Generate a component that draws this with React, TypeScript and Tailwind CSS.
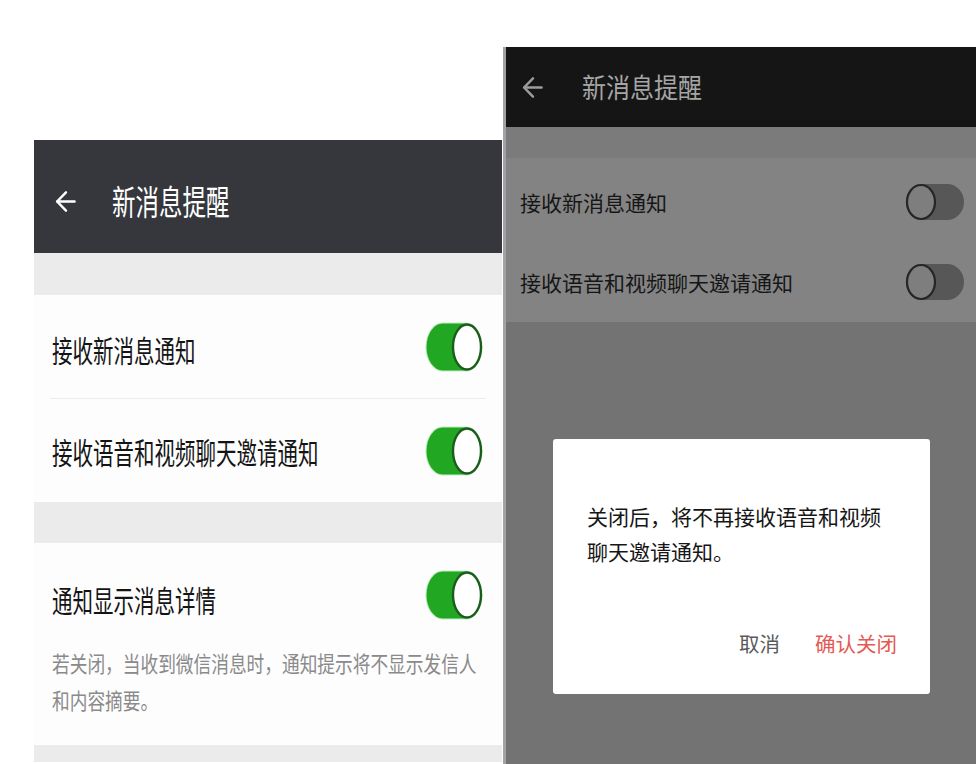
import React from "react";

function BackArrow({ color, w, h }: { color: string; w: number; h: number }) {
  return (
    <svg width={w} height={h} viewBox="0 0 22 24" fill="none">
      <path d="M20.5 12H2.5" stroke={color} strokeWidth="2.6" strokeLinecap="round" />
      <path d="M11.5 2.5L2.2 12L11.5 21.5" stroke={color} strokeWidth="2.6" strokeLinecap="round" strokeLinejoin="round" />
    </svg>
  );
}

function GreenToggle() {
  return (
    <svg width="60" height="52" viewBox="0 0 60 52" className="shrink-0">
      <rect x="1.5" y="1.5" width="57" height="49" rx="17" ry="24.5" fill="#9be29b" opacity="0.6" />
      <rect x="2.5" y="2.5" width="55" height="47" rx="16" ry="23.5" fill="#22a722" />
      <ellipse cx="43" cy="26" rx="14" ry="22.5" fill="#ffffff" stroke="#1b5e1b" strokeWidth="2.4" />
    </svg>
  );
}

function GrayToggle() {
  return (
    <svg width="60" height="38" viewBox="0 0 60 38" className="shrink-0">
      <rect x="1" y="1" width="58" height="36" rx="17" ry="18" fill="#575757" />
      <ellipse cx="16" cy="19" rx="14" ry="17" fill="#7e7e7e" stroke="#262626" strokeWidth="2.2" />
    </svg>
  );
}

function LeftPanel() {
  return (
    <div className="ml-[34px] mt-[140px] w-[468px] flex flex-col bg-[#fdfdfe] shrink-0">
      <div className="h-[113px] bg-[#36373c] flex items-center pl-[21px] pt-[10px]">
        <BackArrow color="#ffffff" w={21} h={23} />
        <span className="ml-[36px] text-[23.5px] leading-none text-white inline-block scale-y-[1.45] origin-center">
          新消息提醒
        </span>
      </div>
      <div className="h-[42px] bg-[#ebebec]" />
      <div className="h-[103px] flex items-center justify-between pl-[18px] pr-[18px]">
        <span className="text-[20.5px] leading-none text-[#141414] inline-block scale-y-[1.45] mt-[5px]">接收新消息通知</span>
        <GreenToggle />
      </div>
      <div className="h-px bg-[#ececee] mx-[16px]" />
      <div className="h-[103px] flex items-center justify-between pl-[18px] pr-[18px]">
        <span className="text-[20.5px] leading-none text-[#141414] inline-block scale-y-[1.45] mt-[2px]">接收语音和视频聊天邀请通知</span>
        <GreenToggle />
      </div>
      <div className="h-[41px] bg-[#ebebec]" />
      <div className="h-[202px] flex flex-col">
        <div className="h-[104px] flex items-center justify-between pl-[18px] pr-[18px]">
          <span className="text-[20.5px] leading-none text-[#141414] inline-block scale-y-[1.45] mt-[8px]">通知显示消息详情</span>
          <GreenToggle />
        </div>
        <div className="pl-[18px] mt-[-3px] text-[17.7px] leading-[37px] text-[#8a8a8a] whitespace-nowrap">
          <span className="inline-block scale-y-[1.25]">若关闭，当收到微信消息时，通知提示将不显示发信人</span>
          <br />
          <span className="inline-block scale-y-[1.25]">和内容摘要。</span>
        </div>
      </div>
      <div className="h-[17px] bg-[#ebebec]" />
      <div className="h-[2px] bg-white" />
    </div>
  );
}

function RightPanel() {
  return (
    <div className="ml-px mt-[47px] w-[473px] h-[717px] shrink-0 border-l-[3px] border-[#a2a2a4] bg-[#737373] relative flex flex-col">
      <div className="h-[80px] bg-[#151515] flex items-center pl-[16px]">
        <BackArrow color="#9c9c9c" w={21} h={23} />
        <span className="ml-[39px] text-[24px] leading-none text-[#a6a6a6] inline-block scale-y-[1.12]">新消息提醒</span>
      </div>
      <div className="h-[31px] bg-[#7b7b7c]" />
      <div className="h-[164px] bg-[#838384] pt-[4px] flex flex-col">
        <div className="h-[80px] flex items-center justify-between pl-[14px] pr-[11px]">
          <span className="text-[21px] leading-none text-[#161616]">接收新消息通知</span>
          <GrayToggle />
        </div>
        <div className="h-[80px] flex items-center justify-between pl-[14px] pr-[11px]">
          <span className="text-[21px] leading-none text-[#161616]">接收语音和视频聊天邀请通知</span>
          <GrayToggle />
        </div>
      </div>
      <div className="flex-1 bg-[#737373]" />
      <div className="absolute left-[47px] top-[392px] w-[377px] h-[255px] bg-white rounded-[3px] flex flex-col">
        <div className="pl-[34px] pt-[60px] text-[21px] leading-[35px] text-[#161616] whitespace-nowrap">
          关闭后，将不再接收语音和视频
          <br />
          聊天邀请通知。
        </div>
        <div className="mt-auto mb-[41px] flex justify-end items-center gap-[35px] pr-[33px] text-[20.5px] leading-none">
          <span className="text-[#5a5a5a]">取消</span>
          <span className="text-[#e35a55]">确认关闭</span>
        </div>
      </div>
    </div>
  );
}

export default function App() {
  return (
    <div className="w-[978px] h-[764px] bg-white flex items-start overflow-hidden font-['Noto_Sans_CJK_SC',sans-serif]">
      <LeftPanel />
      <RightPanel />
    </div>
  );
}
